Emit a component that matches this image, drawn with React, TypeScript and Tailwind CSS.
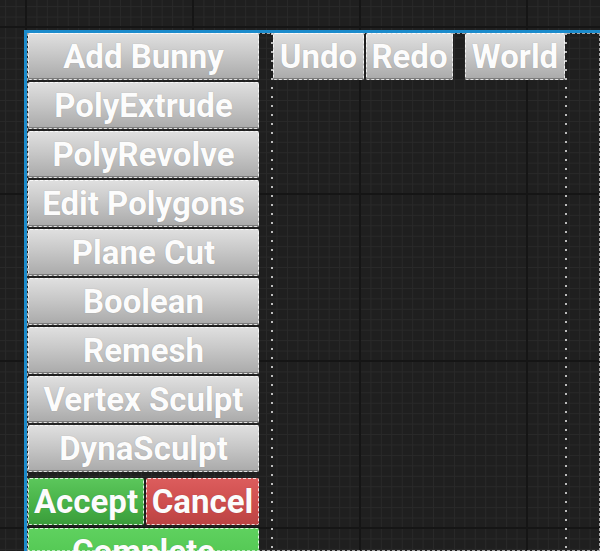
import { clsx } from 'clsx'

const tools = [
  'Add Bunny',
  'PolyExtrude',
  'PolyRevolve',
  'Edit Polygons',
  'Plane Cut',
  'Boolean',
  'Remesh',
  'Vertex Sculpt',
  'DynaSculpt',
]

type Tone = 'gray' | 'green' | 'red' | 'lime'

const toneClass: Record<Tone, string> = {
  gray: 'bg-[linear-gradient(to_bottom,#e0e0e0,#c8c8c8_45%,#a9a9a9)] shadow-[inset_0_-2px_0_#7a7a7a]',
  green: 'bg-[linear-gradient(to_bottom,#5cc75c,#46b046_60%,#3a9b3a)]',
  red: 'bg-[linear-gradient(to_bottom,#dc5d5d,#cc4c4c_60%,#b94343)]',
  lime: 'bg-[linear-gradient(to_bottom,#5fd15f,#4cc24c)]',
}

interface DesignerButtonProps {
  label: string
  tone?: Tone
  className?: string
}

function DesignerButton(props: DesignerButtonProps): React.JSX.Element {
  const { label, tone = 'gray', className } = props

  return (
    <button
      type="button"
      className={clsx(
        'flex h-[47px] items-center justify-center overflow-hidden rounded-[2px] text-[33px] leading-none font-bold whitespace-nowrap text-[#fcfcfc] outline-1 -outline-offset-1 outline-white/80 outline-dashed [text-shadow:0_0_1px_rgba(0,0,0,0.25)]',
        toneClass[tone],
        className
      )}
    >
      {label}
    </button>
  )
}

function DottedLine(): React.JSX.Element {
  return (
    <div className="w-[2px] shrink-0 bg-[repeating-linear-gradient(to_bottom,#bdbdbd_0_2px,transparent_2px_9px)]" />
  )
}

export default function App(): React.JSX.Element {
  return (
    <div
      className="h-[551px] w-[600px] overflow-hidden bg-[#1f1f1f] pt-[30px] pl-[24px] font-['Roboto','Liberation_Sans',sans-serif] [background-image:linear-gradient(to_right,#151515_2px,transparent_2px),linear-gradient(to_bottom,#151515_2px,transparent_2px),linear-gradient(to_right,#292929_1px,transparent_1px),linear-gradient(to_bottom,#292929_1px,transparent_1px)] [background-position:25px_0,0_26px,26px_0,0_27px] [background-size:167px_167px,167px_167px,10.4375px_10.4375px,10.4375px_10.4375px]"
    >
      <div className="h-full border-t-[3px] border-l-[3px] border-[#1b8bcc]">
        <div className="flex h-full outline-1 -outline-offset-1 outline-white/60 outline-dashed">
          {/* left tool column */}
          <div className="ml-[1px] flex w-[231px] shrink-0 flex-col">
            <div className="flex flex-col gap-[2px]">
              {tools.map(tool => (
                <DesignerButton key={tool} label={tool} />
              ))}
            </div>
            <div className="mt-[6px] flex gap-[2px]">
              <DesignerButton label="Accept" tone="green" className="w-[116px]" />
              <DesignerButton label="Cancel" tone="red" className="grow" />
            </div>
            <DesignerButton label="Complete" tone="lime" className="mt-[3px] shrink-0" />
          </div>

          {/* right top bar */}
          <div className="ml-[12px] flex h-full">
            <DottedLine />
            <div className="flex h-[47px] w-[292px] items-start">
              <DesignerButton label="Undo" className="w-[91px]" />
              <DesignerButton label="Redo" className="ml-[2px] w-[87px]" />
              <DesignerButton label="World" className="ml-[12px] w-[100px]" />
            </div>
            <DottedLine />
          </div>
        </div>
      </div>
    </div>
  )
}
